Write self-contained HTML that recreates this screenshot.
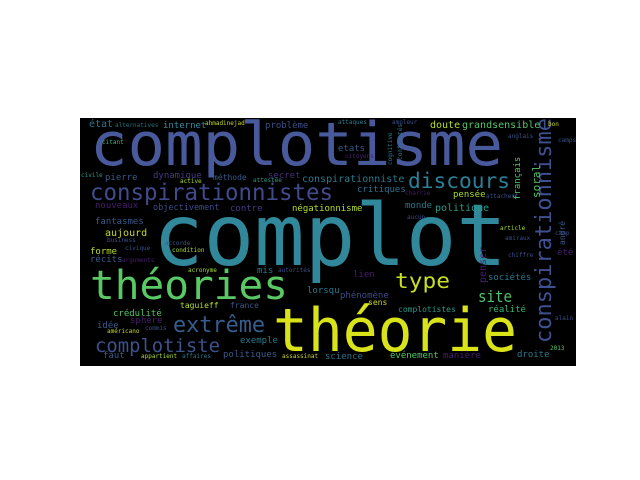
<!DOCTYPE html>
<html><head><meta charset="utf-8"><style>
html,body{margin:0;padding:0;background:#fff;width:640px;height:480px;overflow:hidden}
svg{display:block}
text{font-family:"DejaVu Sans Mono","Liberation Mono",monospace}
</style></head><body>
<svg width="640" height="480" viewBox="0 0 640 480">
<rect x="80" y="118" width="496" height="248" fill="#000"/>
<g>
<text x="90" y="165" font-size="60" fill="#485a9b" textLength="413" lengthAdjust="spacingAndGlyphs">complotisme</text>
<text x="153" y="265" font-size="86" fill="#31889b" textLength="354" lengthAdjust="spacingAndGlyphs">complot</text>
<text x="90" y="299" font-size="40" fill="#5ac864" textLength="198" lengthAdjust="spacingAndGlyphs">théories</text>
<text x="273" y="351" font-size="60" fill="#d9e31a" textLength="244" lengthAdjust="spacingAndGlyphs">théorie</text>
<text x="90" y="200" font-size="23" fill="#414a8b" textLength="243" lengthAdjust="spacingAndGlyphs">conspirationnistes</text>
<text transform="translate(551,343) rotate(-90)" font-size="22" fill="#3f5090" textLength="225" lengthAdjust="spacingAndGlyphs">conspirationnisme</text>
<text x="408" y="188" font-size="21" fill="#2c7f95" textLength="102" lengthAdjust="spacingAndGlyphs">discours</text>
<text x="395" y="288" font-size="21" fill="#c9df22" textLength="55" lengthAdjust="spacingAndGlyphs">type</text>
<text x="478" y="302" font-size="16" fill="#4cc26c" textLength="34" lengthAdjust="spacingAndGlyphs">site</text>
<text x="173" y="332" font-size="22" fill="#365d8d" textLength="92" lengthAdjust="spacingAndGlyphs">extrême</text>
<text x="95" y="352" font-size="19" fill="#3b528b" textLength="125" lengthAdjust="spacingAndGlyphs">complotiste</text>
</g>
<g font-size="9">
<text x="89" y="127" fill="#2a788e" font-size="10">état</text>
<text x="115" y="127" fill="#25737e" font-size="6">alternatives</text>
<text x="163" y="128" fill="#3b8ba0">internet</text>
<text x="205" y="125" fill="#c8d62a" font-size="6">ahmadinejad</text>
<text x="265" y="128" fill="#3a4f88">problème</text>
<text x="338" y="124" fill="#2a7d8e" font-size="6">attaques</text>
<text x="392" y="124" fill="#3a4f88" font-size="6">ampleur</text>
<text x="430" y="128" fill="#b8de29" font-size="10">doute</text>
<text x="462" y="128" fill="#52c569" font-size="10">grandsensible</text>
<text x="548" y="126" fill="#c8d62a" font-size="6">bon</text>
<text x="508" y="138" fill="#3a4f88" font-size="6">anglais</text>
<text x="558" y="142" fill="#3a4f88" font-size="6">camps</text>
<text x="102" y="144" fill="#35b779" font-size="6">citant</text>
<text x="338" y="151" fill="#3a5a8c">etats</text>
<text x="345" y="158" fill="#481d6f" font-size="6">citoyens</text>
<text transform="translate(392,165) rotate(-90)" fill="#2a788e" font-size="6">cognitive</text>
<text transform="translate(402,160) rotate(-90)" fill="#2a788e" font-size="6">confrontés</text>
<text x="81" y="177" fill="#2a9a8a" font-size="6">civile</text>
<text x="105" y="180" fill="#3a5a8c">pierre</text>
<text x="153" y="178" fill="#443a83">dynamique</text>
<text x="213" y="180" fill="#3a5a8c" font-size="8">méthode</text>
<text x="268" y="178" fill="#472c7a">secret</text>
<text x="302" y="182" fill="#2a788e" font-size="10">conspirationniste</text>
<text x="180" y="183" fill="#a8db34" font-size="6">active</text>
<text x="253" y="182" fill="#2a9a8a" font-size="6">attestée</text>
<text x="357" y="192" fill="#2c728e">critiques</text>
<text x="405" y="195" fill="#481d6f" font-size="6">charrie</text>
<text x="453" y="197" fill="#a8db34">pensée</text>
<text x="486" y="198" fill="#3a4f88" font-size="6">attachent</text>
<text transform="translate(520,200) rotate(-90)" fill="#52c569">français</text>
<text transform="translate(540,198) rotate(-90)" fill="#52c569" font-size="11">soral</text>
<text x="95" y="208" fill="#481d6f">nouveaux</text>
<text x="153" y="210" fill="#3e4a89" font-size="8.5">objectivement</text>
<text x="230" y="211" fill="#443983">contre</text>
<text x="292" y="211" fill="#b5de2b">négationnisme</text>
<text x="405" y="208" fill="#2a788e">monde</text>
<text x="435" y="211" fill="#2a9a8a" font-size="10">politique</text>
<text x="407" y="219" fill="#3a4f88" font-size="6">aucun</text>
<text x="95" y="224" fill="#3a5a8c">fantasmes</text>
<text x="500" y="230" fill="#a8db34" font-size="6">article</text>
<text x="105" y="236" fill="#c8d62a" font-size="10">aujourd</text>
<text x="555" y="235" fill="#3a4f88" font-size="6">camp</text>
<text transform="translate(565,245) rotate(-90)" fill="#3a5a8c" font-size="8">andré</text>
<text x="505" y="240" fill="#3a4f88" font-size="6">amiraux</text>
<text x="107" y="242" fill="#3a4f88" font-size="6">business</text>
<text x="90" y="254" fill="#b5de2b">forme</text>
<text x="125" y="250" fill="#3a4f88" font-size="6">civique</text>
<text x="165" y="245" fill="#3a5a8c" font-size="6">accorde</text>
<text x="172" y="252" fill="#a8db34" font-size="6">condition</text>
<text x="508" y="257" fill="#3a4f88" font-size="6">chiffre</text>
<text x="557" y="255" fill="#481d6f">été</text>
<text x="90" y="262" fill="#3a5a8c">récits</text>
<text x="122" y="262" fill="#481d6f" font-size="6">arguments</text>
<text x="188" y="272" fill="#a8db34" font-size="6">acronyme</text>
<text x="257" y="273" fill="#2a788e">mis</text>
<text x="278" y="272" fill="#3a4f88" font-size="6">autorités</text>
<text x="353" y="277" fill="#481d6f">lien</text>
<text transform="translate(486,283) rotate(-90)" fill="#481d6f" font-size="10">penser</text>
<text x="488" y="280" fill="#2a788e">sociétés</text>
<text x="307" y="293" fill="#2a788e">lorsqu</text>
<text x="340" y="298" fill="#3e4989">phénomène</text>
<text x="368" y="305" fill="#c8d62a" font-size="8">sens</text>
<text x="180" y="308" fill="#b5de2b" font-size="8">taguieff</text>
<text x="230" y="308" fill="#3a5a8c" font-size="8">france</text>
<text x="398" y="312" fill="#2a9a8a" font-size="8">complotistes</text>
<text x="488" y="312" fill="#35b779">réalité</text>
<text x="113" y="316" fill="#52c569">crédulité</text>
<text x="130" y="323" fill="#481d6f">sphère</text>
<text x="97" y="328" fill="#3a5a8c">idée</text>
<text x="145" y="330" fill="#3a4f88" font-size="6">commis</text>
<text x="107" y="333" fill="#c8d62a" font-size="6">américano</text>
<text x="555" y="320" fill="#3a4f88" font-size="6">alain</text>
<text x="240" y="343" fill="#2a788e">exemple</text>
<text x="550" y="350" fill="#52c569" font-size="6">2013</text>
<text x="103" y="358" fill="#3a5a8c">faut</text>
<text x="141" y="358" fill="#a8db34" font-size="6">appartient</text>
<text x="182" y="358" fill="#2a788e" font-size="6">affaires</text>
<text x="223" y="357" fill="#3a5a8c">politiques</text>
<text x="282" y="358" fill="#c8d62a" font-size="6">assassinat</text>
<text x="325" y="359" fill="#2c728e">science</text>
<text x="390" y="358" fill="#52c569">événement</text>
<text x="443" y="358" fill="#481d6f">manière</text>
<text x="517" y="357" fill="#2a788e">droite</text>
</g>
</svg>
</body></html>
